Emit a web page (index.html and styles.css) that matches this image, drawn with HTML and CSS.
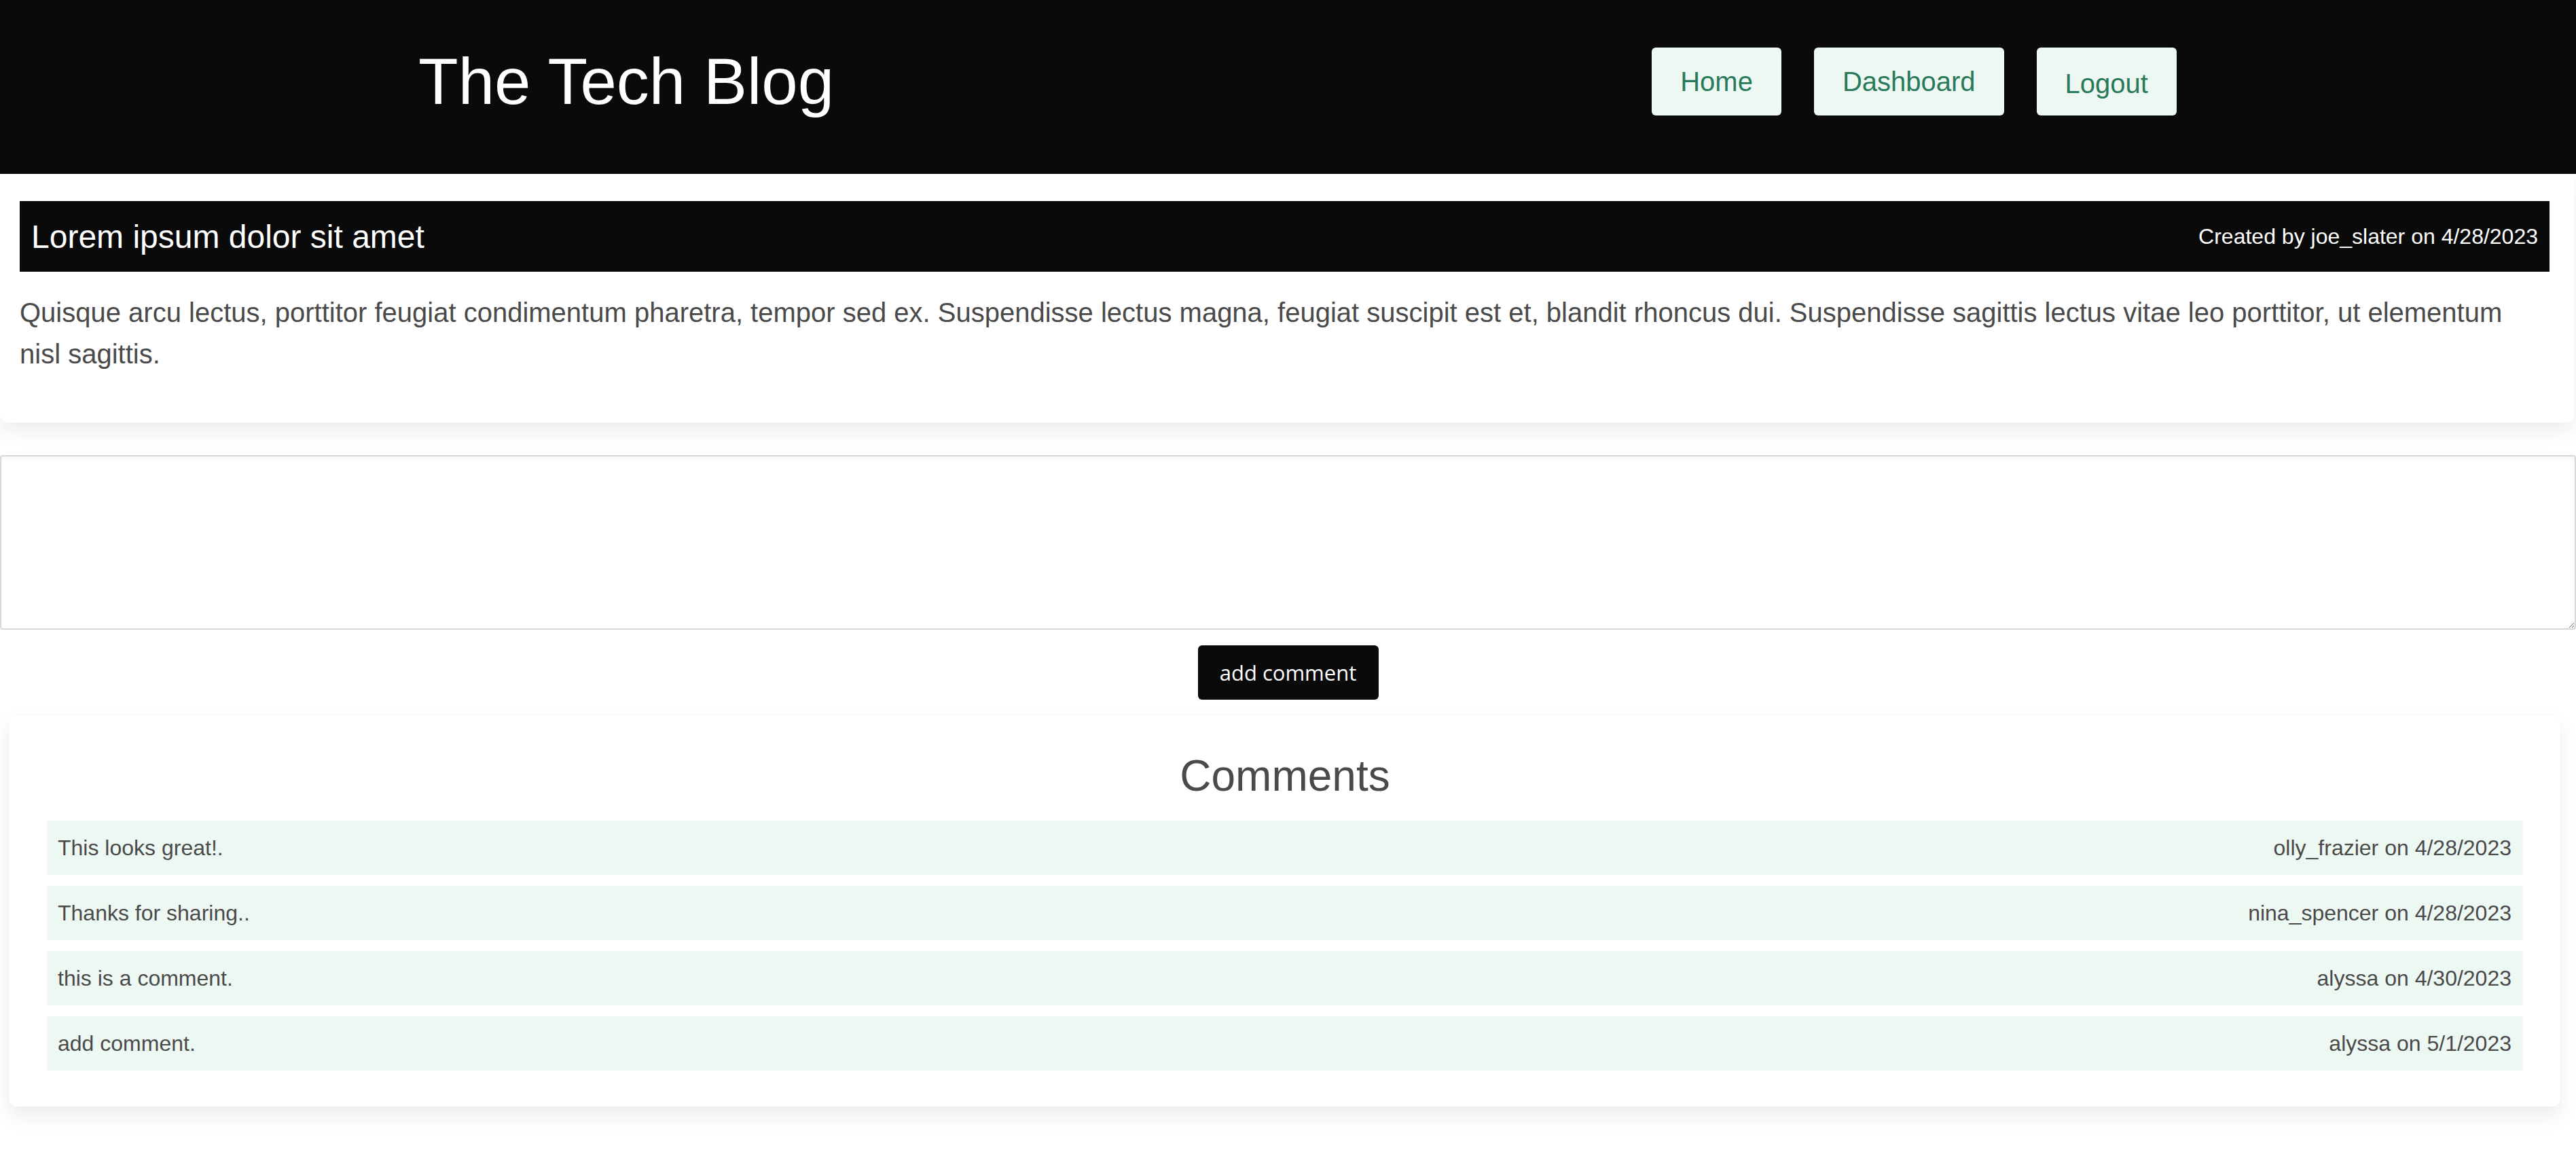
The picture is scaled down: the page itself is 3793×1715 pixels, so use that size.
FILE: index.html
```html
<!DOCTYPE html>
<html lang="en">
<head>
<meta charset="utf-8">
<title>The Tech Blog</title>
<link rel="stylesheet" href="styles.css">
</head>
<body>
<header class="site-header">
  <h1 class="site-title">The Tech Blog</h1>
  <nav class="nav">
    <a class="nav-btn" href="#">Home</a>
    <a class="nav-btn" href="#">Dashboard</a>
    <a class="nav-btn nav-logout" href="#">Logout</a>
  </nav>
</header>

<main>
  <article class="post">
    <div class="post-bar">
      <h2 class="post-title">Lorem ipsum dolor sit amet</h2>
      <span class="post-meta">Created by joe_slater on 4/28/2023</span>
    </div>
    <p class="post-body">Quisque arcu lectus, porttitor feugiat condimentum pharetra, tempor sed ex. Suspendisse lectus magna, feugiat suscipit est et, blandit rhoncus dui. Suspendisse sagittis lectus vitae leo porttitor, ut elementum nisl sagittis.</p>
  </article>

  <form class="comment-form">
    <textarea class="comment-input"></textarea>
    <div class="form-actions">
      <button class="add-btn" type="button">add comment</button>
    </div>
  </form>

  <section class="comments">
    <h2 class="comments-title">Comments</h2>
    <div class="comment-row"><span>This looks great!.</span><span>olly_frazier on 4/28/2023</span></div>
    <div class="comment-row"><span>Thanks for sharing..</span><span>nina_spencer on 4/28/2023</span></div>
    <div class="comment-row"><span>this is a comment.</span><span>alyssa on 4/30/2023</span></div>
    <div class="comment-row"><span>add comment.</span><span>alyssa on 5/1/2023</span></div>
  </section>
</main>
</body>
</html>
```

FILE: styles.css
```css
* { box-sizing: border-box; }

body {
  margin: 0;
  font-family: "Liberation Sans", Arial, sans-serif;
  background: #ffffff;
  color: #4a4a4a;
}

.site-header {
  height: 256px;
  padding: 0 0 16px 14px;
  background: #0a0a0a;
  display: flex;
  justify-content: space-around;
  align-items: center;
}

.site-title {
  margin: 0;
  font-size: 96px;
  font-weight: normal;
  color: #ffffff;
  line-height: 1.15;
}

.nav {
  display: flex;
  gap: 48px;
  margin-right: -14px;
}

.nav-btn {
  display: block;
  padding: 27px 42px;
  font-size: 40px;
  line-height: 46px;
  color: #287a5a;
  background: #eef8f3;
  border-radius: 6px;
  text-decoration: none;
}

.nav-logout {
  padding-top: 30px;
  padding-bottom: 24px;
}

.post {
  padding: 40px 36px 70px 29px;
  margin-right: 3px;
  border-radius: 0 0 12px 12px;
  background: #ffffff;
  box-shadow: 0 14px 28px rgba(0, 0, 0, 0.07);
}

.post-bar {
  height: 104px;
  background: #0a0a0a;
  color: #ffffff;
  display: flex;
  justify-content: space-between;
  align-items: center;
  padding: 0 17px;
}

.post-title {
  margin: 0;
  font-size: 48px;
  font-weight: normal;
}

.post-meta {
  font-size: 32px;
}

.post-body {
  margin: 30px 40px 0 0;
  font-size: 40px;
  line-height: 61px;
  color: #4a4a4a;
}

.comment-form {
  margin-top: 48px;
}

.comment-input {
  display: block;
  width: 100%;
  height: 257px;
  border: 2px solid #d8d8d8;
  border-radius: 4px;
  box-shadow: inset 0 3px 6px rgba(0, 0, 0, 0.04);
  background: #ffffff;
  resize: both;
  font-family: "Liberation Sans", Arial, sans-serif;
}

.form-actions {
  display: flex;
  justify-content: center;
  margin-top: 23px;
}

.add-btn {
  width: 266px;
  height: 80px;
  background: #0a0a0a;
  color: #ffffff;
  border: none;
  border-radius: 6px;
  font-family: "Open Sans", "Noto Sans", sans-serif;
  font-size: 31px;
  padding: 0;
}

.comments {
  margin: 23px 23px 40px 13px;
  padding: 53px 55px 53px 56px;
  background: #ffffff;
  border-radius: 12px;
  box-shadow: 0 14px 30px rgba(0, 0, 0, 0.08), 0 0 3px rgba(0, 0, 0, 0.04);
}

.comments-title {
  margin: 0 0 30px;
  text-align: center;
  font-size: 64px;
  font-weight: normal;
  line-height: 72px;
  color: #4a4a4a;
}

.comment-row {
  height: 80px;
  margin-bottom: 16px;
  padding: 0 17px 0 16px;
  background: #eef8f2;
  display: flex;
  justify-content: space-between;
  align-items: center;
  font-size: 32px;
  color: #4a4a4a;
}

.comment-row:last-child {
  margin-bottom: 0;
}
```
